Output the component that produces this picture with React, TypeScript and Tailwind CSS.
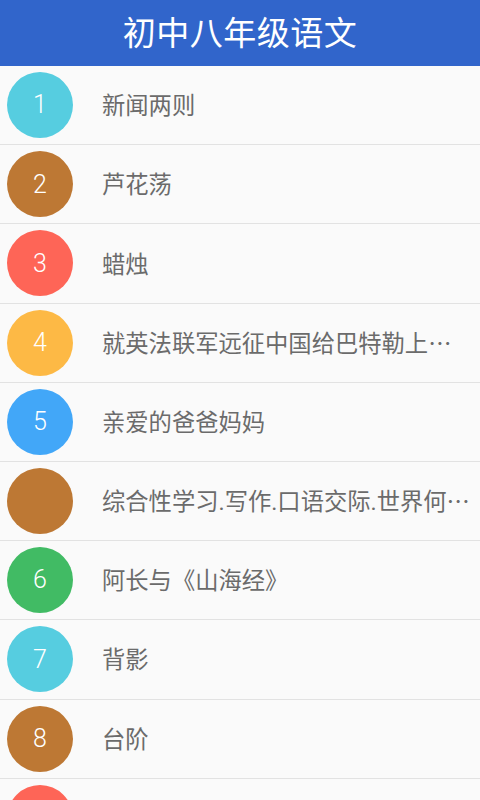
const lessons = [
  { num: '1', title: '新闻两则', color: 'bg-[#56cde0]' },
  { num: '2', title: '芦花荡', color: 'bg-[#bd7834]' },
  { num: '3', title: '蜡烛', color: 'bg-[#fe6557]' },
  { num: '4', title: '就英法联军远征中国给巴特勒上⋯', color: 'bg-[#fdb945]' },
  { num: '5', title: '亲爱的爸爸妈妈', color: 'bg-[#42a7f8]' },
  { num: '', title: '综合性学习.写作.口语交际.世界何⋯', color: 'bg-[#bd7834]' },
  { num: '6', title: '阿长与《山海经》', color: 'bg-[#41bb64]' },
  { num: '7', title: '背影', color: 'bg-[#56cde0]' },
  { num: '8', title: '台阶', color: 'bg-[#bd7834]' },
  { num: '9', title: '', color: 'bg-[#fe6557]' },
];

export default function App() {
  return (
    <div className="w-[480px] h-[800px] overflow-hidden bg-[#fafafa] font-['Roboto','Noto_Sans_CJK_SC',sans-serif]">
      {/* Header */}
      <div className="h-[66px] bg-[#3165cb] flex items-center justify-center">
        <h1 className="text-white text-[33px] tracking-[0.5px] leading-none font-normal">初中八年级语文</h1>
      </div>

      {/* Lesson list */}
      <ul>
        {lessons.map((item, idx) => (
          <li
            key={idx}
            className="h-[79.2px] border-b border-[#e2e2e2] flex items-center pl-[7px] pr-2"
          >
            <div
              className={`w-[66px] h-[66px] rounded-full shrink-0 flex items-center justify-center text-white text-[25px] font-light ${item.color}`}
            >
              {idx < 9 ? item.num : ''}
            </div>
            <span className="ml-[29px] pt-[3px] text-[23.3px] text-[#6b6b6b] whitespace-nowrap overflow-hidden">
              {item.title}
            </span>
          </li>
        ))}
      </ul>
    </div>
  );
}
